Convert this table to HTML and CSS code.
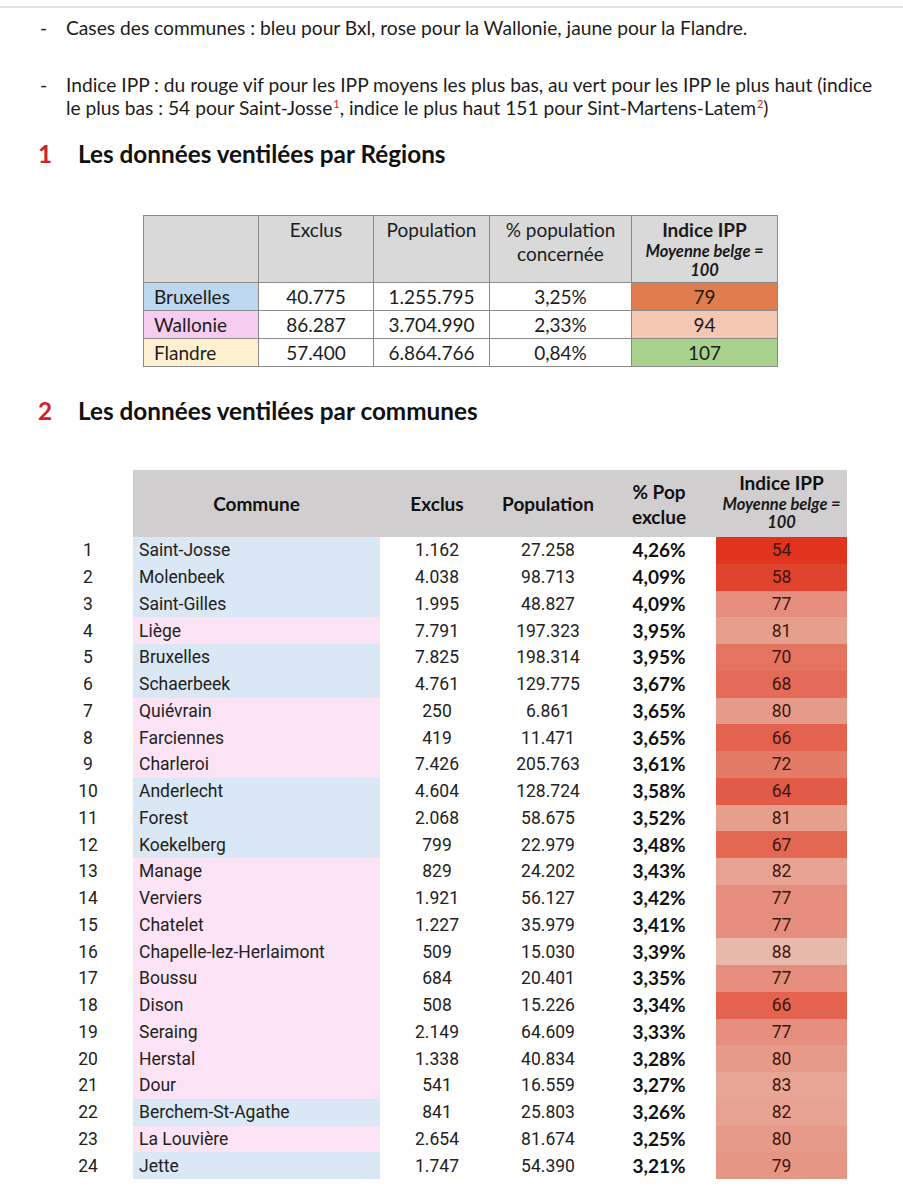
FILE: index.html
```html
<!DOCTYPE html>
<html lang="fr">
<head>
<meta charset="utf-8">
<title>Indice IPP</title>
<link rel="stylesheet" href="styles.css">
</head>
<body>
<div class="topline"></div>
<ul class="bullets">
  <li class="b1"><span class="dash">-</span><span>Cases des communes : bleu pour Bxl, rose pour la Wallonie, jaune pour la Flandre.</span></li>
  <li class="b2"><span class="dash">-</span><span>Indice IPP : du rouge vif pour les IPP moyens les plus bas, au vert pour les IPP le plus haut (indice le plus bas : 54 pour Saint-Josse<sup>1</sup>, indice le plus haut 151 pour Sint-Martens-Latem<sup>2</sup>)</span></li>
</ul>

<h2 class="heading h-first"><span class="num">1</span><span>Les données ventilées par Régions</span></h2>

<table class="regions">
  <colgroup><col class="c1"><col class="c2"><col class="c3"><col class="c4"><col class="c5"></colgroup>
  <thead>
    <tr>
      <th></th>
      <th>Exclus</th>
      <th>Population</th>
      <th>% population<br>concernée</th>
      <th class="ipp-h"><b>Indice IPP</b><i>Moyenne belge =<br>100</i></th>
    </tr>
  </thead>
  <tbody>
    <tr><td class="name bxl">Bruxelles</td><td>40.775</td><td>1.255.795</td><td>3,25%</td><td class="ipp-bxl">79</td></tr>
    <tr><td class="name wal">Wallonie</td><td>86.287</td><td>3.704.990</td><td>2,33%</td><td class="ipp-wal">94</td></tr>
    <tr><td class="name fla">Flandre</td><td>57.400</td><td>6.864.766</td><td>0,84%</td><td class="ipp-fla">107</td></tr>
  </tbody>
</table>

<h2 class="heading h-second"><span class="num">2</span><span>Les données ventilées par communes</span></h2>

<table class="communes">
  <colgroup><col class="k0"><col class="k1"><col class="k2"><col class="k3"><col class="k4"><col class="k5"></colgroup>
  <thead>
    <tr>
      <th class="blank"></th>
      <th>Commune</th>
      <th>Exclus</th>
      <th>Population</th>
      <th class="pp">% Pop<br>exclue</th>
      <th class="ipp-h"><b>Indice IPP</b><i>Moyenne belge =<br>100</i></th>
    </tr>
  </thead>
  <tbody>
    <tr><td class="rank">1</td><td class="cn bxl">Saint-Josse</td><td>1.162</td><td>27.258</td><td class="pct">4,26%</td><td class="ipp" style="background:rgb(224,52,30)">54</td></tr>
    <tr><td class="rank">2</td><td class="cn bxl">Molenbeek</td><td>4.038</td><td>98.713</td><td class="pct">4,09%</td><td class="ipp" style="background:rgb(225,68,46)">58</td></tr>
    <tr><td class="rank">3</td><td class="cn bxl">Saint-Gilles</td><td>1.995</td><td>48.827</td><td class="pct">4,09%</td><td class="ipp" style="background:rgb(229,142,125)">77</td></tr>
    <tr><td class="rank">4</td><td class="cn wal">Liège</td><td>7.791</td><td>197.323</td><td class="pct">3,95%</td><td class="ipp" style="background:rgb(230,158,141)">81</td></tr>
    <tr><td class="rank">5</td><td class="cn bxl">Bruxelles</td><td>7.825</td><td>198.314</td><td class="pct">3,95%</td><td class="ipp" style="background:rgb(228,115,96)">70</td></tr>
    <tr><td class="rank">6</td><td class="cn bxl">Schaerbeek</td><td>4.761</td><td>129.775</td><td class="pct">3,67%</td><td class="ipp" style="background:rgb(227,107,88)">68</td></tr>
    <tr><td class="rank">7</td><td class="cn wal">Quiévrain</td><td>250</td><td>6.861</td><td class="pct">3,65%</td><td class="ipp" style="background:rgb(230,154,137)">80</td></tr>
    <tr><td class="rank">8</td><td class="cn wal">Farciennes</td><td>419</td><td>11.471</td><td class="pct">3,65%</td><td class="ipp" style="background:rgb(227,99,79)">66</td></tr>
    <tr><td class="rank">9</td><td class="cn wal">Charleroi</td><td>7.426</td><td>205.763</td><td class="pct">3,61%</td><td class="ipp" style="background:rgb(228,122,104)">72</td></tr>
    <tr><td class="rank">10</td><td class="cn bxl">Anderlecht</td><td>4.604</td><td>128.724</td><td class="pct">3,58%</td><td class="ipp" style="background:rgb(226,91,71)">64</td></tr>
    <tr><td class="rank">11</td><td class="cn bxl">Forest</td><td>2.068</td><td>58.675</td><td class="pct">3,52%</td><td class="ipp" style="background:rgb(230,158,141)">81</td></tr>
    <tr><td class="rank">12</td><td class="cn bxl">Koekelberg</td><td>799</td><td>22.979</td><td class="pct">3,48%</td><td class="ipp" style="background:rgb(227,103,83)">67</td></tr>
    <tr><td class="rank">13</td><td class="cn wal">Manage</td><td>829</td><td>24.202</td><td class="pct">3,43%</td><td class="ipp" style="background:rgb(231,162,145)">82</td></tr>
    <tr><td class="rank">14</td><td class="cn wal">Verviers</td><td>1.921</td><td>56.127</td><td class="pct">3,42%</td><td class="ipp" style="background:rgb(229,142,125)">77</td></tr>
    <tr><td class="rank">15</td><td class="cn wal">Chatelet</td><td>1.227</td><td>35.979</td><td class="pct">3,41%</td><td class="ipp" style="background:rgb(229,142,125)">77</td></tr>
    <tr><td class="rank">16</td><td class="cn wal">Chapelle-lez-Herlaimont</td><td>509</td><td>15.030</td><td class="pct">3,39%</td><td class="ipp" style="background:rgb(232,185,170)">88</td></tr>
    <tr><td class="rank">17</td><td class="cn wal">Boussu</td><td>684</td><td>20.401</td><td class="pct">3,35%</td><td class="ipp" style="background:rgb(229,142,125)">77</td></tr>
    <tr><td class="rank">18</td><td class="cn wal">Dison</td><td>508</td><td>15.226</td><td class="pct">3,34%</td><td class="ipp" style="background:rgb(227,99,79)">66</td></tr>
    <tr><td class="rank">19</td><td class="cn wal">Seraing</td><td>2.149</td><td>64.609</td><td class="pct">3,33%</td><td class="ipp" style="background:rgb(229,142,125)">77</td></tr>
    <tr><td class="rank">20</td><td class="cn wal">Herstal</td><td>1.338</td><td>40.834</td><td class="pct">3,28%</td><td class="ipp" style="background:rgb(230,154,137)">80</td></tr>
    <tr><td class="rank">21</td><td class="cn wal">Dour</td><td>541</td><td>16.559</td><td class="pct">3,27%</td><td class="ipp" style="background:rgb(231,165,149)">83</td></tr>
    <tr><td class="rank">22</td><td class="cn bxl">Berchem-St-Agathe</td><td>841</td><td>25.803</td><td class="pct">3,26%</td><td class="ipp" style="background:rgb(231,162,145)">82</td></tr>
    <tr><td class="rank">23</td><td class="cn wal">La Louvière</td><td>2.654</td><td>81.674</td><td class="pct">3,25%</td><td class="ipp" style="background:rgb(230,154,137)">80</td></tr>
    <tr><td class="rank">24</td><td class="cn bxl">Jette</td><td>1.747</td><td>54.390</td><td class="pct">3,21%</td><td class="ipp" style="background:rgb(230,150,133)">79</td></tr>
  </tbody>
</table>
</body>
</html>
```

FILE: styles.css
```css
html, body {
  margin: 0;
  padding: 0;
  background: #ffffff;
}
body {
  width: 903px;
  font-family: Lato, "Open Sans", sans-serif;
  color: #1c1c1c;
}
.topline {
  height: 2px;
  margin-top: 6px;
  background: #e2e2e2;
}
.bullets {
  list-style: none;
  margin: 8px 0 0 0;
  padding: 0;
  font-size: 19.2px;
  line-height: 23px;
}
.bullets li {
  display: flex;
  padding-right: 22px;
}
.bullets .dash {
  flex: 0 0 auto;
  width: 26px;
  margin-left: 40px;
}
.bullets .b2 {
  margin-top: 34px;
}
.bullets sup {
  display: inline-block;
  margin-left: 1px;
  color: #d0202a;
  font-size: 11px;
  line-height: 11px;
  vertical-align: 7px;
}
.heading {
  display: flex;
  margin: 0;
  font-size: 24.3px;
  line-height: 28px;
  font-weight: 700;
  color: #111;
}
.heading .num {
  width: 40px;
  margin-left: 38px;
  color: #d0202a;
}
.h-first { margin-top: 21px; }
.h-second { margin-top: 30px; }

/* Table 1 */
.regions {
  border-collapse: collapse;
  margin: 47px 0 0 143px;
  font-size: 19px;
  color: #1c1c1c;
  table-layout: fixed;
}
.regions .c1 { width: 115px; }
.regions .c2 { width: 115px; }
.regions .c3 { width: 116px; }
.regions .c4 { width: 142px; }
.regions .c5 { width: 146px; }
.regions th, .regions td {
  border: 1px solid #8a8a8a;
  text-align: center;
  padding: 0;
}
.regions th {
  height: 64px;
  background: #d9d9d9;
  font-weight: 400;
  vertical-align: top;
  line-height: 24px;
  padding-top: 2px;
}
.regions td {
  height: 27px;
  line-height: 26px;
}
.regions td.name {
  text-align: left;
  padding-left: 10px;
}
.ipp-h b {
  display: block;
  font-weight: 700;
  line-height: 24px;
}
.ipp-h i {
  display: block;
  font-size: 16.5px;
  font-weight: 700;
  line-height: 19px;
  color: #1a1a1a;
}
.regions .bxl { background: #bdd7ee; }
.regions .wal { background: #f7cdef; }
.regions .fla { background: #fff1cf; }
.ipp-bxl { background: #e17c4e; }
.ipp-wal { background: #f3c7b2; }
.ipp-fla { background: #a9d18e; }

/* Table 2 */
.communes {
  border-collapse: collapse;
  margin: 45px 0 0 68px;
  table-layout: fixed;
  font-family: Roboto, "Liberation Sans", sans-serif;
  font-size: 17.5px;
  color: #222;
}
.communes .k0 { width: 65px; }
.communes .k1 { width: 247px; }
.communes .k2 { width: 114px; }
.communes .k3 { width: 108px; }
.communes .k4 { width: 114px; }
.communes .k5 { width: 131px; }
.communes th, .communes td {
  padding: 0;
  text-align: center;
}
.communes thead th {
  height: 66px;
  background: #d0cecf;
  font-family: Lato, "Open Sans", sans-serif;
  font-size: 19px;
  font-weight: 700;
  color: #111;
  line-height: 25px;
}
.communes thead th.blank {
  background: transparent;
}
.communes thead th.ipp-h {
  vertical-align: top;
  padding-top: 1px;
}
.communes thead th.ipp-h b { line-height: 24px; }
.communes thead th.ipp-h i { line-height: 18px; }
.communes td {
  height: 26.75px;
  line-height: 26px;
}
.communes td.rank {
  padding-right: 25px;
}
.communes td.cn {
  text-align: left;
  padding-left: 6px;
}
.communes .bxl { background: #dae7f4; }
.communes .wal { background: #fce3f5; }
.communes td.pct {
  font-family: Lato, "Open Sans", sans-serif;
  font-weight: 700;
  font-size: 19px;
  color: #111;
}
.communes td.ipp {
  color: #3f1610;
}
```
